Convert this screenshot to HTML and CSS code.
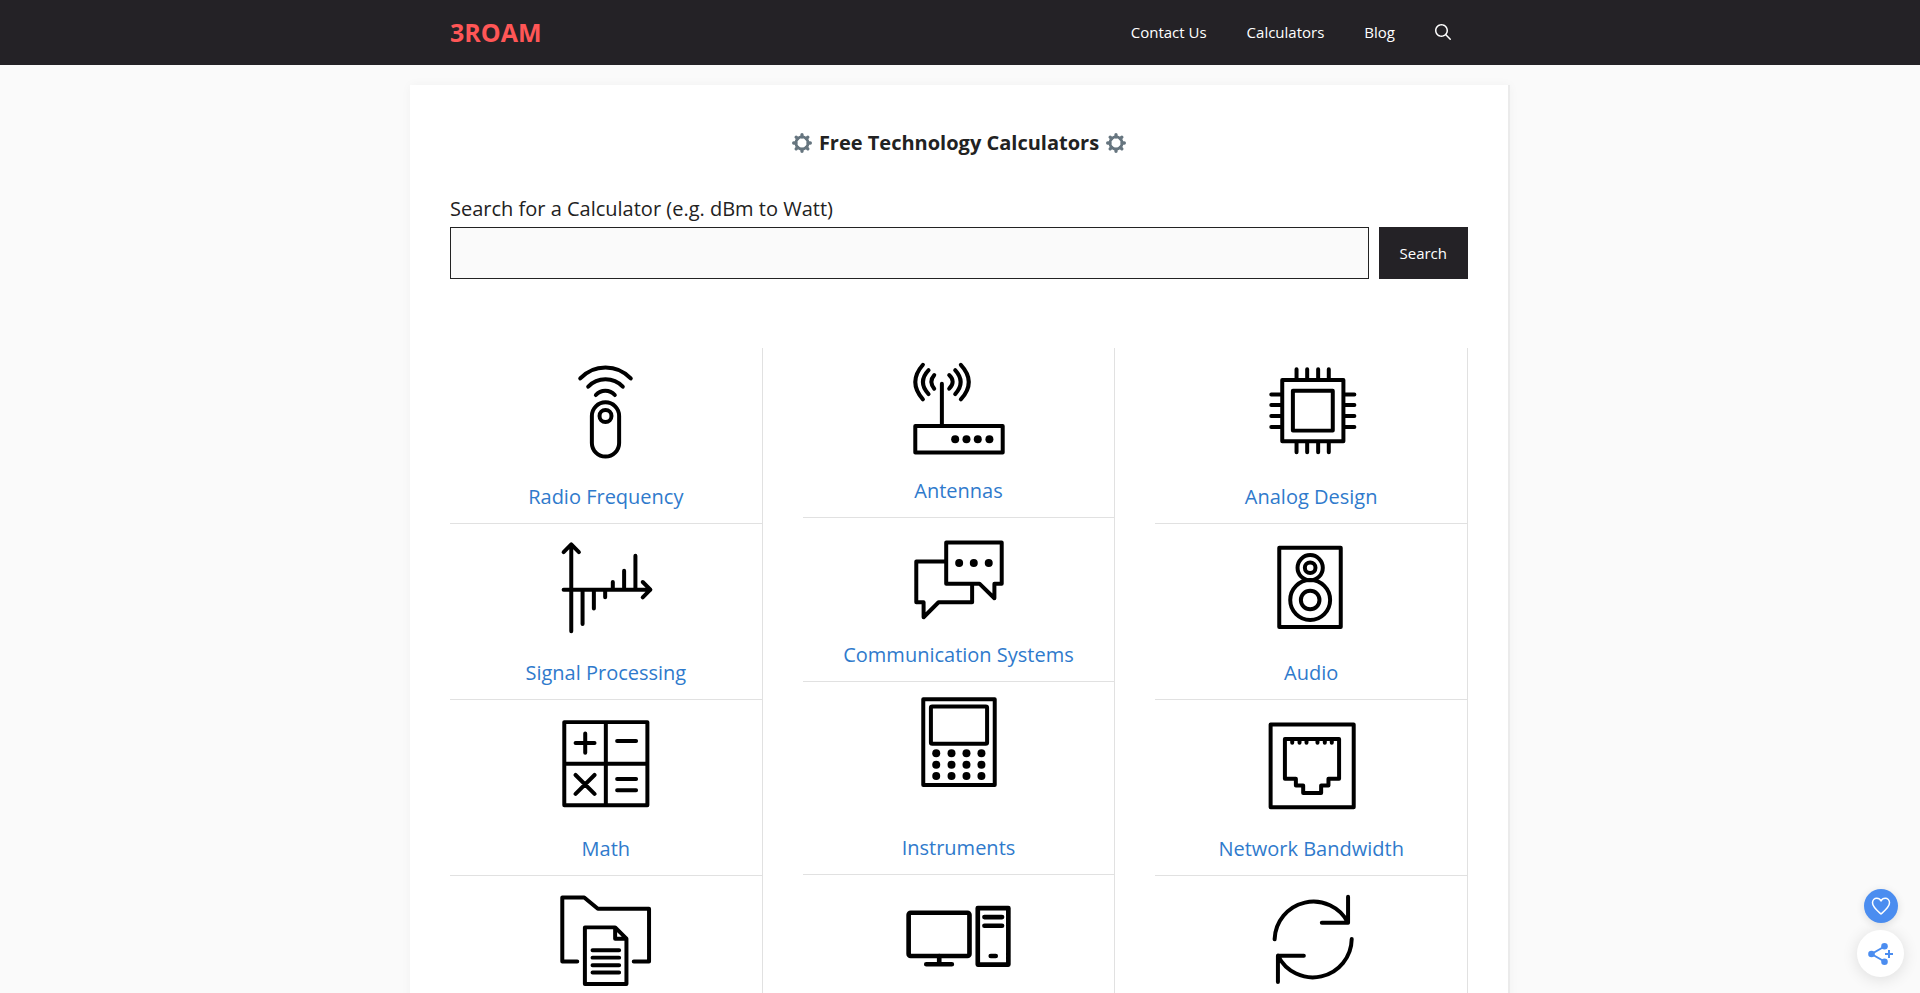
FILE: index.html
```html
<!DOCTYPE html>
<html lang="en">
  <head>
    <title>3ROAM</title>
    <meta charset="UTF-8" />
    <meta name="viewport" content="width=device-width, initial-scale=1" />
    <link rel="stylesheet" href="styles.css">
  </head>
  <body>
    <header class="site-header">
      <div class="header-inner">
        <a class="logo" href="#">3ROAM</a>
        <nav class="main-nav">
          <a href="#">Contact Us</a>
          <a href="#">Calculators</a>
          <a href="#">Blog</a>
          <a class="nav-search" href="#" aria-label="Search">
            <svg viewBox="0 0 512 512" width="16" height="16"><path fill="currentColor" fill-rule="evenodd" d="M208 48c-88 0-160 72-160 160s72 160 160 160 160-72 160-160S296 48 208 48zM0 208C0 93 93 0 208 0s208 93 208 208c0 48-16 92-44 128l133 134c9 9 9 24 0 34-9 10-24 10-34 0L337 371c-35 28-80 45-129 45C93 416 0 323 0 208z"/></svg>
          </a>
        </nav>
      </div>
    </header>

    <main class="content">
      <h1 class="title">
        <svg class="gear" viewBox="0 0 36 36"><g fill="none" stroke="#66757f"><circle cx="18" cy="18" r="11" stroke-width="5"/><path stroke-width="6" stroke-linecap="round" d="M18 7V3M18 29v4M7 18H3M29 18h4"/><path stroke-width="6" stroke-linecap="round" d="M10 10L7.500 7.500M26 10l2.500-2.500M10 26l-2.500 2.500M26 26l2.500 2.500"/></g></svg>
        <span>Free Technology Calculators</span>
        <svg class="gear" viewBox="0 0 36 36"><g fill="none" stroke="#66757f"><circle cx="18" cy="18" r="11" stroke-width="5"/><path stroke-width="6" stroke-linecap="round" d="M18 7V3M18 29v4M7 18H3M29 18h4"/><path stroke-width="6" stroke-linecap="round" d="M10 10L7.500 7.500M26 10l2.500-2.500M10 26l-2.500 2.500M26 26l2.500 2.500"/></g></svg>
      </h1>

      <form class="search-form">
        <label for="search">Search for a Calculator (e.g. dBm to Watt)</label>
        <div class="search-row">
          <input type="search" id="search" />
          <button type="submit">Search</button>
        </div>
      </form>

      <div class="columns">
        <div class="column">
          <a class="category" href="#">
            <svg class="icon" viewBox="317 24 361 402" width="120" height="134">
              <path d="M420 115A104 104 0 0 1 572 115M444 140A72 72 0 0 1 548 140M467 165A38 38 0 0 1 524 165"/>
              <rect x="455" y="187" width="82" height="163" rx="41"/>
              <circle cx="496" cy="228" r="18"/>
            </svg>
            <span>Radio Frequency</span>
          </a>
          <a class="category" href="#">
            <svg class="icon" viewBox="317 552 361 402" width="120" height="134">
              <path d="M393 874V613M370 636L393 613L416 636M370 749H631M608 726L631 749L608 772M427 749V852M461 749V806M495 749V772M518 749V726M552 749V692M586 749V647"/>
            </svg>
            <span>Signal Processing</span>
          </a>
          <a class="category" href="#">
            <svg class="icon" viewBox="317 120 361 402" width="120" height="134">
              <path d="M372 186H622V436H372ZM497 186V436M372 311H622M406 249H463M435 220V278M531 243H588M406 345L463 402M463 345L406 402M531 357H588M531 391H588"/>
            </svg>
            <span>Math</span>
          </a>
          <a class="category" href="#" aria-label="Files">
            <svg class="icon" viewBox="317 648 361 402" width="120" height="134">
              <path d="M411 905H366V712H432L473 746H627V905H581M434 802H525L559 836V972H434ZM525 802V836H559M457 871H537M457 893H537M457 916H537M457 938H537"/>
            </svg>
          </a>
        </div>

        <div class="column">
          <a class="category" href="#">
            <svg class="icon" viewBox="324 24 361 384" width="120" height="128">
              <path d="M376 258H639V338H376ZM456 258V131M433 105Q416 124 433 146M416 90Q382 126 416 162M399 74Q353 126 399 178M478 105Q499 124 478 146M496 90Q529 126 496 162M513 74Q561 126 513 178"/>
              <g class="dots"><circle cx="496" cy="298" r="12"/><circle cx="530" cy="298" r="12"/><circle cx="564" cy="298" r="12"/><circle cx="599" cy="298" r="12"/></g>
            </svg>
            <span>Antennas</span>
          </a>
          <a class="category" href="#">
            <svg class="icon" viewBox="324 534 361 366" width="120" height="122">
              <path d="M469 607H636V731H614V775L569 731H469ZM469 664H379V787H401V832L446 787H547V731"/>
              <g class="dots"><circle cx="508" cy="669" r="12"/><circle cx="552" cy="669" r="12"/><circle cx="597" cy="669" r="12"/></g>
            </svg>
            <span>Communication Systems</span>
          </a>
          <a class="category" href="#">
            <svg class="icon" viewBox="324 66 361 453" width="120" height="151">
              <rect x="400" y="117" width="215" height="258"/>
              <rect x="423" y="139" width="169" height="112" rx="4"/>
              <g class="dots">
                <circle cx="439" cy="280" r="12"/><circle cx="485" cy="280" r="12"/><circle cx="530" cy="280" r="12"/><circle cx="575" cy="280" r="12"/>
                <circle cx="439" cy="314" r="12"/><circle cx="485" cy="314" r="12"/><circle cx="530" cy="314" r="12"/><circle cx="575" cy="314" r="12"/>
                <circle cx="439" cy="348" r="12"/><circle cx="485" cy="348" r="12"/><circle cx="530" cy="348" r="12"/><circle cx="575" cy="348" r="12"/>
              </g>
            </svg>
            <span>Instruments</span>
          </a>
          <a class="category" href="#" aria-label="Computers">
            <svg class="icon icon-bold" viewBox="324 645 361 402" width="120" height="134">
              <rect x="356" y="758" width="183" height="130" rx="6"/>
              <path d="M448 888V913M409 913H486M564 744H656V914H564ZM584 771H637M584 797H637M603 888H618"/>
            </svg>
          </a>
        </div>

        <div class="column">
          <a class="category" href="#">
            <svg class="icon" viewBox="333 24 361 402" width="120" height="134">
              <path d="M427 120H611V304H427ZM459 152H579V272H459ZM470 120V87M502 120V87M535 120V87M567 120V87M470 304V337M502 304V337M535 304V337M567 304V337M427 163H394M427 195H394M427 228H394M427 261H394M611 163H644M611 195H644M611 228H644M611 261H644"/>
            </svg>
            <span>Analog Design</span>
          </a>
          <a class="category" href="#">
            <svg class="icon" viewBox="333 552 361 402" width="120" height="134">
              <rect x="418" y="623" width="185" height="238"/>
              <circle cx="511" cy="683" r="38"/><circle cx="511" cy="683" r="16"/>
              <circle cx="511" cy="780" r="60"/><circle cx="511" cy="780" r="28"/>
            </svg>
            <span>Audio</span>
          </a>
          <a class="category" href="#">
            <svg class="icon" viewBox="333 120 361 402" width="120" height="134">
              <path d="M392 193H642V442H392ZM435 237H598V356H566V377H544V399H490V377H468V356H435ZM457 237V248M479 237V248M500 237V248M533 237V248M555 237V248M576 237V248"/>
            </svg>
            <span>Network Bandwidth</span>
          </a>
          <a class="category" href="#" aria-label="Conversion">
            <svg class="icon" viewBox="333 648 361 402" width="120" height="134">
              <path d="M404 838A117 117 0 0 1 625 788M625 710V788H546M636 837A117 117 0 0 1 414 887M414 966V887H492"/>
            </svg>
          </a>
        </div>
      </div>
    </main>

    <div class="floating">
      <button class="like" type="button" aria-label="Like">
        <svg viewBox="0 0 20 20" width="20" height="20"><path fill="none" stroke="#fff" stroke-width="1.500" stroke-linejoin="round" d="M10 18C6 14.500 1.500 11 1.500 6.800C1.500 4 3.500 2.200 5.800 2.200C7.700 2.200 9.200 3.300 10 5C10.800 3.300 12.300 2.200 14.200 2.200C16.500 2.200 18.500 4 18.500 6.800C18.500 11 14 14.500 10 18Z"/></svg>
      </button>
      <button class="share" type="button" aria-label="Share">
        <svg viewBox="0 0 26 24" width="26" height="24"><g fill="#4b8df0" stroke="#4b8df0"><path fill="none" stroke-width="2" d="M16.500 4.500L3.500 12L16.500 19.500"/><g stroke="none"><circle cx="16.500" cy="4.200" r="3.300"/><circle cx="3.500" cy="12" r="3.300"/><circle cx="16.500" cy="19.800" r="3.300"/></g><path stroke-width="2" d="M21 8v8M17 12h8"/></g></svg>
      </button>
    </div>
  </body>
</html>
```

FILE: styles.css
```css
* {
  box-sizing: border-box;
}
body {
  margin: 0;
  background-color: #fafafa;
  color: #222;
  font-family: "Open Sans", sans-serif;
  font-size: 20px;
  line-height: 30px;
}
a {
  color: #2f7acc;
  text-decoration: none;
}
.site-header {
  background-color: #242226;
}
.header-inner {
  display: flex;
  align-items: center;
  justify-content: space-between;
  max-width: 1100px;
  height: 65px;
  margin: 0 auto;
  padding: 0 40px 2px;
}
.logo {
  color: #ff5656;
  font-size: 25px;
  font-weight: bold;
}
.main-nav {
  display: flex;
  gap: 40px;
  align-items: center;
  margin-right: 19px;
}
.main-nav a {
  color: #fff;
  font-size: 15px;
}
.nav-search svg {
  display: block;
}
.content {
  max-width: 1100px;
  margin: 20px auto 0;
  padding: 40px;
  padding-bottom: 0;
  background: #fff;
  border-right: 2px solid #ebebeb;
  box-shadow: 0 0 10px rgba(23, 23, 23, 0.04);
}
.title {
  display: flex;
  align-items: center;
  justify-content: center;
  gap: 7px;
  margin: 3px 0 36px;
  font-size: 20px;
}
.gear {
  width: 20px;
  height: 20px;
}
.search-form label {
  display: block;
  margin-bottom: 3px;
}
.search-row {
  display: flex;
  gap: 10px;
}
.search-row input {
  flex: 1;
  height: 52px;
  padding: 10px 15px;
  background: #fafafa;
  border: 1px solid #222;
  border-radius: 0;
  font: inherit;
}
.search-row button {
  padding: 10px 21px;
  background-color: #242226;
  color: #fff;
  border: none;
  font-family: inherit;
  font-size: 15px;
  cursor: pointer;
}
.columns {
  display: grid;
  grid-template-columns: repeat(3, 1fr);
  gap: 40px;
  margin-top: 69px;
}
.column {
  border-right: 1px solid #e1e1e1;
}
.category {
  display: flex;
  flex-direction: column;
  align-items: center;
  padding-bottom: 11px;
  border-bottom: 1px solid #e1e1e1;
}
.category:last-child {
  padding-bottom: 0;
  border-bottom: none;
}
.icon {
  fill: none;
  stroke: #000;
  stroke-width: 12;
  stroke-linecap: round;
  stroke-linejoin: round;
}
.icon-bold {
  stroke-width: 14;
}
.dots {
  fill: #000;
  stroke: none;
}
.floating {
  position: fixed;
  right: 16px;
  bottom: 16px;
  display: flex;
  flex-direction: column;
  align-items: center;
  gap: 7px;
}
.floating button {
  display: flex;
  align-items: center;
  justify-content: center;
  padding: 0;
  border: none;
  border-radius: 50%;
  cursor: pointer;
}
.like {
  width: 34px;
  height: 34px;
  background: #4b8df0;
  box-shadow: 0 2px 8px rgba(0, 0, 0, 0.12);
}
.share {
  width: 47px;
  height: 47px;
  background: #fff;
  box-shadow: 0 2px 16px rgba(0, 0, 0, 0.12);
}
```
